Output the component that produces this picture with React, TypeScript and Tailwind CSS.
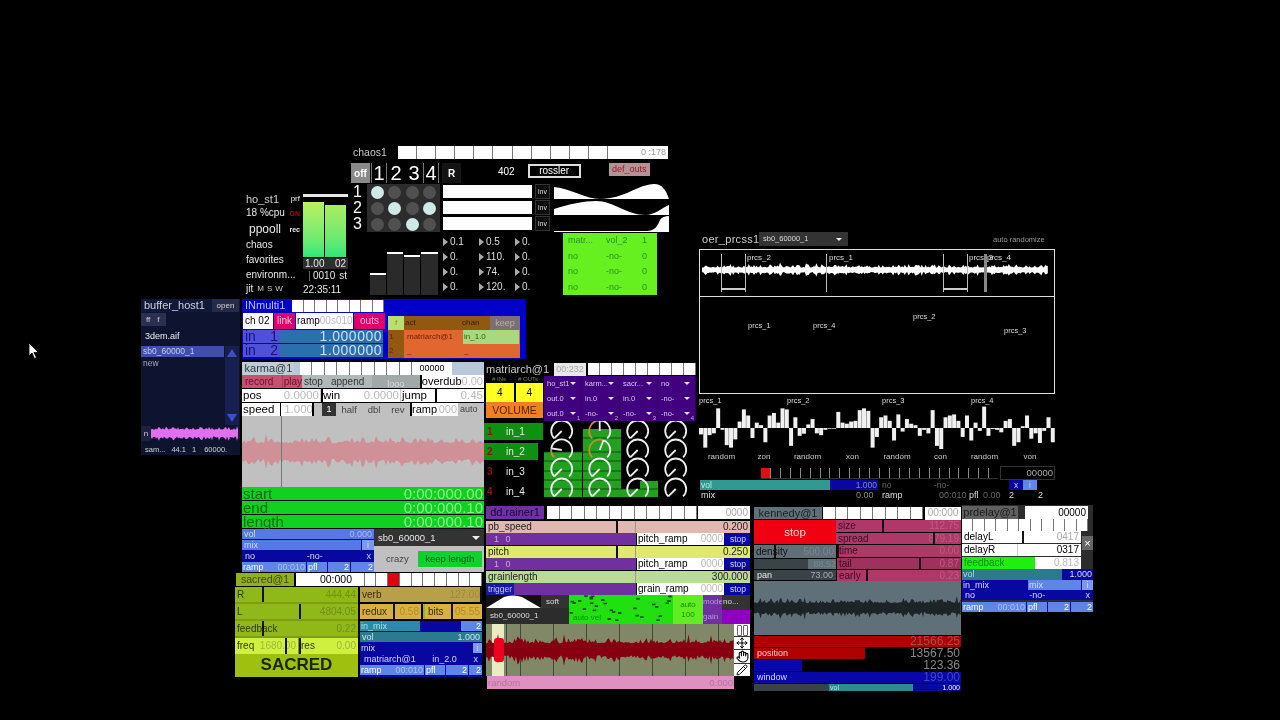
import { Hand, Move, Pencil } from 'lucide-react';

// seeded noise so the waveforms stay the same between renders
function noise(seed: number) {
  let s = seed;
  return () => {
    s = (s * 16807) % 2147483647;
    return s / 2147483647;
  };
}

function wavePath(w: number, h: number, amp: number, step: number, seed: number, base: number) {
  const rnd = noise(seed);
  const top: string[] = [];
  const bottom: string[] = [];
  const mid = h / 2;
  for (let x = 0; x <= w; x += step) {
    const a = amp * (base + 0.65 * rnd() * rnd() + (rnd() > 0.9 ? 0.45 : 0));
    top.push(`${x},${(mid - a).toFixed(1)}`);
    bottom.unshift(`${x},${(mid + a * (0.75 + rnd() * 0.4)).toFixed(1)}`);
  }
  return `M${top.join(' L')} L${bottom.join(' L')} Z`;
}

interface WaveProps {
  w: number;
  h: number;
  amp: number;
  step: number;
  seed: number;
  color: string;
  base?: number;
}

function Wave({ w, h, amp, step, seed, color, base = 0.35 }: WaveProps) {
  return (
    <svg width={w} height={h} className="block">
      <path d={wavePath(w, h, amp, step, seed, base)} fill={color} />
    </svg>
  );
}

function Cells({ n, hot, className }: { n: number; hot?: number; className?: string }) {
  return (
    <div className={`flex ${className ?? ''}`}>
      {Array.from({ length: n }).map((_, i) => (
        <div key={i} className={`flex-1 border-r border-[#777] ${i === hot ? 'bg-[#e00010]' : 'bg-white'}`} />
      ))}
    </div>
  );
}

interface FaderProps {
  className?: string;
  label?: string;
  value?: string;
  thumb?: number;
  valueCls?: string;
}

function Fader({ className, label, value, thumb, valueCls }: FaderProps) {
  return (
    <div className={`relative flex items-center justify-between overflow-hidden px-[2px] leading-none whitespace-nowrap ${className ?? ''}`}>
      <span>{label}</span>
      <span className={valueCls}>{value}</span>
      {thumb !== undefined && <i className="absolute top-0 bottom-0 w-[2px] bg-[#111]" style={{ left: thumb }} />}
    </div>
  );
}

function RampRow() {
  return (
    <div className="flex h-[10px] gap-[1px] bg-[#0808a0] text-[9px] leading-[10px] text-white">
      <div className="flex w-[64px] justify-between bg-[#5f85e8] px-[1px]">
        <span>ramp</span>
        <span className="text-[#a8c0f4]">00:010</span>
      </div>
      <div className="w-[20px] bg-[#5f85e8] px-[1px]">pfl</div>
      <div className="w-[22px] bg-[#5f85e8] px-[1px] text-right">2</div>
      <div className="flex-1 bg-[#5f85e8] px-[1px] text-right">2</div>
    </div>
  );
}

function Tri() {
  return <i className="mr-[2px] inline-block border-y-[4px] border-l-[5px] border-y-transparent border-l-[#aaa]" />;
}

function HoSt() {
  return (
    <div className="absolute left-[246px] top-[192px] flex h-[104px] w-[102px] text-[10px] leading-none text-[#e8e8e8]">
      <div className="flex w-[57px] flex-col pr-[3px]">
        <div className="flex h-[14px] items-center justify-between">
          <span className="text-[11px] text-[#ccc]">ho_st1</span>
          <span className="text-[8px]">prf</span>
        </div>
        <div className="flex h-[14px] items-center justify-between whitespace-nowrap">
          <span>18 %cpu</span>
          <span className="text-[7px] font-bold text-[#a01010]">ON</span>
        </div>
        <div className="flex h-[18px] items-center justify-between pl-[3px]">
          <span className="text-[12px]">ppooll</span>
          <span className="text-[7px] font-bold">rec</span>
        </div>
        <div className="flex h-[14px] items-center">chaos</div>
        <div className="flex h-[15px] items-center">favorites</div>
        <div className="flex h-[15px] items-center whitespace-nowrap">environm...</div>
        <div className="flex h-[14px] items-center gap-[4px]">
          <span>jit</span>
          <span className="text-[8px] tracking-[3px] text-[#ccc]">MSW</span>
        </div>
      </div>
      <div className="flex flex-1 flex-col">
        <div className="mt-[2px] h-[3px] bg-[#e8e8e8]" />
        <div className="mt-[5px] flex h-[55px] items-end gap-[1px]">
          <div className="h-[55px] w-[21px] bg-gradient-to-b from-[#b8f060] to-[#28e878]" />
          <div className="relative h-[52px] w-[21px] bg-gradient-to-b from-[#a8ee60] to-[#28e878]" />
        </div>
        <div className="mt-[1px] flex h-[11px] items-center justify-between bg-[#2e2e2e] px-[2px]">
          <span>1.00</span>
          <span>02</span>
        </div>
        <div className="mt-[1px] flex h-[11px] items-center justify-between pl-[6px] pr-[1px]">
          <span className="border-l border-[#666] pl-[3px]">0010</span>
          <span>st</span>
        </div>
        <div className="mt-[4px] text-[10px]">22:35:11</div>
      </div>
    </div>
  );
}

const matrix = [
  [1, 0, 0, 0],
  [0, 1, 0, 1],
  [0, 0, 1, 0],
];
const numbers = ['0.1', '0.5', '0.', '0.', '110.', '0.', '0.', '74.', '0.', '0.', '120.', '0.'];
const sends = [
  ['matr...', 'vol_2', '1'],
  ['no', '-no-', '0'],
  ['no', '-no-', '0'],
  ['no', '-no-', '0'],
];

function Chaos() {
  return (
    <div className="absolute left-[351px] top-[145px] flex h-[151px] w-[320px] flex-col text-white">
      <div className="flex h-[14px] items-center">
        <span className="ml-[2px] w-[45px] text-[10.5px] leading-none text-[#c8c8c8]">chaos1</span>
        <Cells n={11} className="h-[13px] w-[210px]" />
        <div className="h-[13px] w-[60px] bg-white pr-[2px] text-right text-[9px] leading-[13px] text-[#999]">0 :178</div>
      </div>
      <div className="mt-[4px] flex h-[20px]">
        <div className="flex w-[19px] items-center justify-center bg-[#8a8a8a] text-[10px] font-bold">off</div>
        <div className="ml-[1px] flex w-[69px] items-center text-[20px] leading-none">
          <span className="w-[16px] border-x border-[#777] text-center">1</span>
          <span className="w-[18px] text-center">2</span>
          <span className="w-[18px] text-center">3</span>
          <span className="w-[16px] border-x border-[#777] text-center">4</span>
        </div>
        <div className="ml-[2px] flex w-[19px] items-center justify-center bg-[#141414] text-[10px] font-bold">R</div>
        <span className="ml-[37px] -mt-[3px] self-center text-[10px]">402</span>
        <div className="ml-[13px] mt-[1px] flex h-[14px] w-[53px] items-center justify-center border-2 border-[#ddd] text-[10px] leading-none">rossler</div>
        <div className="ml-[28px] flex h-[13px] w-[41px] items-center justify-center bg-[#b89098] text-[9px] leading-none text-[#b01020]">def_outs</div>
      </div>
      <div className="mt-[1px] flex h-[48px]">
        <div className="flex w-[16px] flex-col items-center pr-[3px] text-[16px] leading-[16px]">
          <span>1</span>
          <span>2</span>
          <span>3</span>
        </div>
        <div className="grid w-[73px] grid-cols-4 items-center justify-items-center bg-[#2c2c2c] px-[2px]">
          {matrix.flat().map((on, i) => (
            <div key={i} className={`h-[13px] w-[13px] rounded-full ${on ? 'bg-[#d0e8e8]' : 'bg-[#505050]'}`} />
          ))}
        </div>
        <div className="ml-[3px] flex w-[89px] flex-col gap-[3px] py-[1px]">
          <div className="h-[13px] bg-white" />
          <div className="h-[13px] bg-white" />
          <div className="h-[13px] bg-white" />
        </div>
        <div className="ml-[3px] flex w-[15px] flex-col gap-[1px] text-[7px]">
          {['inv', 'inv', 'inv'].map((t, i) => (
            <div key={i} className="flex h-[15px] items-center justify-center border border-[#333] bg-[#0c0c0c] leading-none text-[#ddd]">
              {t}
            </div>
          ))}
        </div>
        <svg width="115" height="48" className="ml-[4px]">
          <path d="M0 15 L0 3 C18 5 32 15 46 15 C70 15 85 0 100 0 C108 0 112 6 115 15 Z" fill="#fff" />
          <path d="M0 31 L0 25 C15 20 30 17 42 17 C60 17 72 31 92 31 C100 31 108 24 115 21 L115 31 Z" fill="#fff" />
          <path d="M0 47 L90 47 C98 47 102 46 106 36 C108 33 111 32 115 32 L115 48 L0 48 Z" fill="#fff" />
        </svg>
      </div>
      <div className="mt-[1px] flex h-[63px]">
        <div className="flex w-[92px] items-end gap-[1px] pl-[19px] pb-[1px]">
          <div className="h-[22px] w-[16px] border-t-2 border-white bg-[#2a2a2a]" />
          <div className="h-[43px] w-[16px] border-t-2 border-white bg-[#2a2a2a]" />
          <div className="h-[40px] w-[16px] border-t-2 border-white bg-[#2a2a2a]" />
          <div className="h-[43px] w-[17px] border-t-2 border-white bg-[#2a2a2a]" />
        </div>
        <div className="mt-[1px] grid h-[60px] w-[108px] grid-cols-3 text-[10px] leading-[15px] text-[#ddd]">
          {numbers.map((n, i) => (
            <div key={i} className="flex items-center">
              <Tri />
              {n}
            </div>
          ))}
        </div>
        <div className="ml-[12px] grid h-[62px] w-[94px] grid-cols-[38px_36px_1fr] items-center bg-[#66f020] px-[5px] text-[9px] leading-none text-[#28921c]">
          {sends.flat().map((t, i) => (
            <span key={i}>{t}</span>
          ))}
        </div>
      </div>
    </div>
  );
}

function BufferHost() {
  return (
    <div className="absolute left-[141px] top-[299px] flex h-[156px] w-[99px] flex-col bg-[#0e1430] text-[#d0d0d8]">
      <div className="flex h-[13px] items-center bg-[#10193a]">
        <span className="ml-[3px] w-[67px] text-[11px] leading-none">buffer_host1</span>
        <span className="ml-[1px] flex h-[13px] w-[27px] items-center justify-center bg-[#262c48] text-[8px]">open</span>
      </div>
      <div className="mt-[1px] flex h-[13px] w-[25px] items-center gap-[7px] bg-[#2b3050] pl-[5px] text-[8px]">
        <span>ff</span>
        <span>f</span>
      </div>
      <div className="mt-[4px] h-[13px] pl-[4px] text-[9px] leading-[13px] text-[#eee]">3dem.aif</div>
      <div className="mt-[3px] flex h-[79px]">
        <div className="w-[83px] text-[8.5px] leading-[11px]">
          <div className="bg-[#3f4fa8] pl-[2px] text-[#c8ccee]">sb0_60000_1</div>
          <div className="pl-[2px] pt-[1px] text-[#aab]">new</div>
        </div>
        <div className="ml-[1px] flex w-[14px] flex-col items-center justify-between bg-[#161f50] py-[3px]">
          <i className="border-x-[5px] border-b-[8px] border-x-transparent border-b-[#3f4fb8]" />
          <i className="border-x-[5px] border-t-[8px] border-x-transparent border-t-[#3f4fc8]" />
        </div>
      </div>
      <div className="mt-[1px] flex h-[15px] items-center">
        <span className="flex h-[15px] w-[10px] items-center justify-center bg-[#1c2140] text-[8px]">n</span>
        <Wave w={87} h={15} amp={4.5} step={1} seed={91} color="#e070f0" base={0.85} />
      </div>
      <div className="mt-[4px] flex gap-[6px] pl-[4px] text-[7.5px] leading-[10px] whitespace-nowrap">
        <span>sam...</span>
        <span>44.1</span>
        <span>1</span>
        <span className="ml-[2px]">60000.</span>
      </div>
    </div>
  );
}

function InMulti() {
  return (
    <div className="absolute left-[242px] top-[299px] flex h-[60px] w-[284px] bg-[#0000c8]">
      <div className="flex w-[144px] flex-col">
        <div className="flex h-[13px] items-center">
          <span className="ml-[3px] w-[47px] text-[11px] leading-none text-[#b8c0f0]">INmulti1</span>
          <Cells n={8} className="h-[12px] w-[92px]" />
        </div>
        <div className="mt-[1px] flex h-[16px] gap-[1px] text-[10px] leading-[16px]">
          <div className="ml-[1px] w-[30px] bg-white pl-[2px] text-black">ch 02</div>
          <div className="w-[21px] bg-[#e0006a] text-center text-[#f8c8dc]">link</div>
          <div className="flex w-[57px] justify-between bg-white px-[1px] text-black">
            ramp<span className="text-[#bbb]">00s010</span>
          </div>
          <div className="w-[31px] bg-[#e0006a] text-center text-[#fbd]">outs</div>
        </div>
        {['1', '2'].map((n) => (
          <div key={n} className="mt-[1px] flex h-[13px] text-[14px] leading-[13px]">
            <div className="ml-[1px] flex w-[37px] justify-between bg-[#5050d8] px-[2px] text-[#141478]">
              <span>in</span>
              <span>{n}</span>
            </div>
            <div className="mr-[3px] flex flex-1 justify-end bg-[#2a70b0] pr-[1px] tracking-[0.5px] text-[#cfe0f4]">1.000000</div>
          </div>
        ))}
      </div>
      <div className="ml-[2px] mt-[17px] flex h-[42px] w-[132px] flex-col text-[8px] leading-[14px]">
        <div className="flex h-[14px] bg-[#905810] text-[#3a2000]">
          <span className="w-[16px] bg-[#b8e070] text-center text-[#7a9030]">f</span>
          <span className="w-[57px] pl-[1px]">act</span>
          <span className="w-[29px] pl-[1px]">chan</span>
          <span className="flex-1 bg-[#7a7070] text-center text-[9px] text-[#b8b0a8]">keep</span>
        </div>
        <div className="flex h-[14px] bg-[#e06830] text-[#702000]">
          <span className="w-[16px] bg-[#905810] pl-[1px]">1</span>
          <span className="w-[59px] pl-[3px]">matriarch@1</span>
          <span className="w-[56px] bg-[#a8d880] pl-[1px] text-[#306000]">in_1.0</span>
        </div>
        <div className="flex h-[14px] bg-[#e06830] text-[#702000]">
          <span className="w-[16px] bg-[#905810] pl-[1px]">2</span>
          <span className="w-[59px] pl-[3px]">_</span>
          <span className="w-[56px] pl-[1px]">_</span>
        </div>
      </div>
    </div>
  );
}

function Karma() {
  return (
    <div className="absolute left-[242px] top-[362px] flex h-[209px] w-[242px] flex-col text-black">
      <div className="flex h-[14px] items-center bg-[#b8c8d8]">
        <div className="ml-[1px] h-[13px] w-[51px] bg-[#c0ccd8] text-center text-[11px] leading-[13px] text-[#333]">karma@1</div>
        <Cells n={9} className="ml-[6px] h-[13px] w-[112px]" />
        <div className="h-[13px] w-[40px] bg-white text-center text-[9px] leading-[13px]">00000</div>
      </div>
      <div className="flex h-[13px] text-[10px] leading-[13px]">
        <div className="flex w-[60px] bg-[#c85070] text-[#6a1030]">
          <span className="w-[41px] pl-[3px]">record</span>
          <span className="flex-1 border-l border-[#a04060] pl-[1px]">play</span>
        </div>
        <div className="flex w-[70px] gap-[4px] bg-[#b0b8b8] pl-[2px] text-[#333]">
          <span>stop</span>
          <span className="ml-[4px]">append</span>
        </div>
        <div className="w-[48px] bg-[#a0a8a8] text-center text-[9px] leading-[18px] text-[#ddd]">looo</div>
        <div className="flex flex-1 justify-between border-l-2 border-black bg-white pr-[1px] text-[11px]">
          <span>overdub</span>
          <span className="text-[#bbb]">0.00</span>
        </div>
      </div>
      <div className="mt-[1px] flex h-[13px] gap-[1px] bg-[#ccc] text-[11.5px] leading-[13px]">
        <div className="flex w-[78px] justify-between bg-white px-[1px]">
          pos<span className="text-[#bbb]">0.0000</span>
        </div>
        <div className="flex w-[79px] justify-between border-l-2 border-black bg-white pr-[1px]">
          win<span className="text-[#bbb]">0.0000</span>
        </div>
        <div className="relative flex flex-1 justify-between bg-white px-[1px]">
          jump<span className="text-[#bbb]">0.45</span>
          <i className="absolute bottom-0 left-[34px] top-0 w-[2px] bg-black" />
        </div>
      </div>
      <div className="mt-[1px] flex h-[13px] bg-[#c0c0c0] text-[11.5px] leading-[13px]">
        <div className="relative flex w-[72px] justify-between bg-white px-[1px]">
          speed<span className="text-[#bbb]">1.000</span>
          <i className="absolute bottom-0 left-[38px] top-0 w-[1px] bg-black" />
          <i className="absolute bottom-0 left-[70px] top-0 w-[2px] bg-black" />
        </div>
        <div className="ml-[8px] h-[13px] w-[14px] bg-[#333] text-center text-[9px] text-white">1</div>
        <div className="flex w-[74px] justify-around text-[9.5px] text-[#444]">
          <span>half</span>
          <span>dbl</span>
          <span>rev</span>
        </div>
        <div className="flex w-[48px] justify-between border-l-2 border-black bg-white pr-[1px] text-[11px]">
          ramp<span className="text-[#bbb]">000</span>
        </div>
        <div className="flex-1 pl-[2px] text-[9px] text-[#444]">auto</div>
      </div>
      <div className="relative h-[71px] bg-[#c0c0c0]">
        <div className="pt-[1px]">
          <Wave w={242} h={70} amp={11} step={2} seed={43} color="#d09098" base={0.8} />
        </div>
        <i className="absolute bottom-0 left-[39px] top-0 w-[1px] bg-[#777]" />
      </div>
      {[
        ['start', '0:00:000.00'],
        ['end', '0:00:000.10'],
        ['length', '0:00:000.10'],
      ].map(([a, b]) => (
        <div key={a} className="mb-[1px] flex h-[13px] items-center justify-between bg-[#10d020] px-[1px] text-[15px] leading-[13px] text-[#086a10]">
          <span>{a}</span>
          <span className="text-[#90f090]">{b}</span>
        </div>
      ))}
      <div className="flex h-[43px]">
        <div className="flex w-[132px] flex-col gap-[1px] bg-[#0808a0] text-[9px] leading-[10px]">
          <Fader className="h-[10px] bg-[#5878e8] text-[#d0dcf8]" label="vol" value="0.000" valueCls="text-[#a8c0f4]" />
          <div className="flex h-[10px]">
            <div className="w-[119px] bg-[#5878e8] pl-[2px] text-[#d0dcf8]">mix</div>
            <div className="ml-[1px] flex-1 bg-[#7a98ee] text-center text-[#d0dcf8]">i</div>
          </div>
          <div className="flex h-[10px] justify-between bg-[#0808a0] px-[3px] text-[#d0d8f8]">
            <span>no</span>
            <span className="ml-[8px]">-no-</span>
            <span>x</span>
          </div>
          <RampRow />
        </div>
        <div className="flex flex-1 flex-col bg-[#c0c0c0]">
          <div className="flex h-[17px] items-center justify-between bg-[#333] pl-[4px] pr-[4px] text-[9.5px] leading-none text-[#e8e8e8]">
            sb0_60000_1
            <i className="border-x-[4px] border-t-[4px] border-x-transparent border-t-[#eee]" />
          </div>
          <div className="flex flex-1 items-center pl-[12px] text-[9.5px]">
            <span className="text-[#444]">crazy</span>
            <span className="ml-[9px] flex h-[16px] w-[64px] items-center justify-center bg-[#10d030] text-[#095a20]">keep length</span>
          </div>
        </div>
      </div>
    </div>
  );
}

function Sacred() {
  return (
    <div className="absolute left-[235px] top-[572px] flex h-[105px] w-[247px] flex-col text-black">
      <div className="flex h-[14px] items-center">
        <div className="ml-[1px] h-[13px] w-[58px] bg-[#90b020] text-center text-[10.5px] leading-[13px] text-[#404800]">sacred@1</div>
        <div className="ml-[2px] h-[13px] w-[57px] bg-white pr-[1px] text-right text-[10.5px] leading-[13px]">00:000</div>
        <Cells n={11} hot={3} className="h-[13px] flex-1" />
      </div>
      <div className="mt-[1px] flex flex-1">
        <div className="flex w-[123px] flex-col gap-[2px] bg-[#7e9e14] text-[10px]">
          <Fader className="h-[15px] bg-[#90b818] text-[#2e3a00]" label="R" value="444.44" thumb={27} valueCls="text-[#728f20]" />
          <Fader className="h-[15px] bg-[#90b818] text-[#2e3a00]" label="L" value="4804.05" thumb={64} valueCls="text-[#728f20]" />
          <Fader className="h-[15px] bg-[#90b818] text-[#2e3a00]" label="feedback" value="0.22" thumb={27} valueCls="text-[#728f20]" />
          <div className="flex h-[16px] gap-[1px]">
            <Fader className="w-[63px] bg-[#d0f040] text-[#2e3a00]" label="freq" value="1680.00" thumb={50} valueCls="text-[#a0b840]" />
            <Fader className="flex-1 bg-[#d0f040] text-[#2e3a00]" label="res" value="0.00" thumb={0} valueCls="text-[#a0b840]" />
          </div>
          <div className="-mt-[2px] flex-1 bg-[#a0c010] text-center text-[17px] font-bold leading-[21px] text-[#1c2400]">SACRED</div>
        </div>
        <div className="ml-[2px] flex flex-1 flex-col gap-[2px] text-[10px]">
          <Fader className="h-[15px] bg-[#b8a048] text-[#3a2c00]" label="verb" value="127.00" thumb={120} valueCls="text-[#a08a38]" />
          <div className="flex h-[15px] gap-[2px]">
            <Fader className="w-[61px] bg-[#d8b040] text-[#3a2c00]" label="redux" value="0.58" thumb={33} valueCls="text-[#b08c30]" />
            <Fader className="flex-1 border-l-[2px] border-[#90b818] bg-[#d8b040] pl-[3px] text-[#3a2c00]" label="bits" value="05.55" thumb={26} valueCls="text-[#b08c30]" />
          </div>
          <div className="flex flex-1 flex-col gap-[1px] bg-[#0808a0] text-[9px] leading-[10px]">
            <div className="flex h-[10px] bg-[#0808a0]">
              <div className="w-[60px] bg-[#2c8aa8] pl-[1px] text-[#a8e0e8]">in_mix</div>
              <div className="flex-1" />
              <div className="w-[21px] bg-[#5f85e8] pr-[1px] text-right text-white">2</div>
            </div>
            <Fader className="h-[10px] bg-[#2c7a90] text-[#c8e8f0]" label="vol" value="1.000" />
            <div className="flex h-[10px] text-[#d0d8f8]">
              <span className="flex-1 pl-[1px]">mix</span>
              <span className="w-[9px] bg-[#7a98ee] text-center">i</span>
            </div>
            <div className="flex h-[10px] justify-between px-[4px] text-[#d0d8f8]">
              <span>matriarch@1</span>
              <span>in_2.0</span>
              <span>x</span>
            </div>
            <RampRow />
          </div>
        </div>
      </div>
    </div>
  );
}

function Knobs() {
  const cols = [17.7, 55.7, 93.7, 131.7];
  const rows = [10, 29, 48, 68];
  // pointer position per knob, only a few are moved off their resting place
  const moved: Record<string, number> = { '1-0': 0.2, '0-1': 0.5, '1-1': 0.58 };
  const polar = (cx: number, cy: number, r: number, t: number) => {
    const a = ((t * 270 - 135 - 90) * Math.PI) / 180;
    return [cx + r * Math.cos(a), cy + r * Math.sin(a)];
  };
  const arc = (cx: number, cy: number, from: number, to: number) => {
    const [x1, y1] = polar(cx, cy, 10.5, from);
    const [x2, y2] = polar(cx, cy, 10.5, to);
    return `M${x1} ${y1} A10.5 10.5 0 ${to - from > 2 / 3 ? 1 : 0} 1 ${x2} ${y2}`;
  };
  return (
    <svg width="151" height="78" className="block">
      <g fill="#22a020">
        <rect x="0" y="31" width="38" height="45" />
        <rect x="39" y="8" width="38" height="68" />
        <rect x="77" y="68" width="20" height="8" />
        <rect x="96" y="60" width="18" height="16" />
      </g>
      <g stroke="#0a3a0a" strokeWidth="0.8">
        {[17, 31, 40, 50, 59, 68].map((y) => (
          <path key={y} d={`M${y < 30 ? 39 : 0} ${y}H${y < 60 ? 77 : 114}`} />
        ))}
      </g>
      <g fill="none" strokeWidth="1.8">
        {rows.map((y, r) =>
          cols.map((x, c) => {
            const v = moved[`${r}-${c}`] ?? 0;
            const [px, py] = polar(x, y, 10.5, v);
            return (
              <g key={`${r}-${c}`}>
                {v > 0 && <path d={arc(x, y, 0, v)} stroke="#c09030" />}
                <path d={arc(x, y, v, 1)} stroke="#eee" />
                <path d={`M${x} ${y}L${px} ${py}`} stroke="#eee" />
              </g>
            );
          }),
        )}
      </g>
    </svg>
  );
}

const routing = [
  ['ho_st1', 'karm...', 'sacr...', 'no'],
  ['out.0', 'in.0', 'in.0', '-no-'],
  ['out.0', '-no-', '-no-', '-no-'],
];

function Matriarch() {
  return (
    <div className="absolute left-[484px] top-[362px] flex w-[212px] flex-col">
      <div className="flex h-[14px] items-center">
        <span className="ml-[2px] w-[68px] text-[11px] leading-none text-[#ccc]">matriarch@1</span>
        <span className="h-[13px] w-[32px] bg-[#e8e8e8] text-center text-[9px] leading-[13px] text-[#aaa]">00:232</span>
        <Cells n={9} className="ml-[2px] h-[12px] flex-1" />
      </div>
      <div className="flex">
        <div className="flex w-[60px] flex-col">
          <div className="flex h-[7px] justify-around pl-[2px] text-[6px] leading-[7px] text-[#6a9a10]">
            <span># INs</span>
            <span># OUTs</span>
          </div>
          <div className="ml-[2px] flex h-[19px] w-[57px] gap-[2px] text-[10px] leading-[19px] text-black">
            <div className="flex-1 bg-[#ffff20] text-center">4</div>
            <div className="flex-1 bg-[#ffff20] text-center">4</div>
          </div>
          <div className="ml-[2px] h-[16px] w-[57px] bg-[#f08020] text-center text-[10.5px] leading-[16px] text-[#5a2000]">VOLUME</div>
          <div className="mt-[5px] flex flex-col text-[10px] leading-none">
            {['in_1', 'in_2', 'in_3', 'in_4'].map((t, i) => (
              <div key={t} className={`mb-[3px] flex h-[17px] items-center ${i < 2 ? (i === 0 ? 'w-[59px] bg-[#109010]' : 'w-[54px] bg-[#109010]') : 'w-[54px]'}`}>
                <span className="w-[22px] pl-[3px] font-bold text-[#901010]">{i + 1}</span>
                <span className="text-[#e8e8e8]">{t}</span>
              </div>
            ))}
          </div>
        </div>
        <div className="flex w-[152px] flex-col">
          <div className="grid h-[45px] grid-cols-4 bg-[#400080] text-[7.5px] leading-none text-[#d8c8e8]">
            {routing.flatMap((row, r) =>
              row.map((t, c) => (
                <div key={`${r}${c}`} className="relative flex items-center justify-between border-r border-[#300060] pl-[3px] pr-[5px]">
                  <span className="whitespace-nowrap">{t}</span>
                  <i className="border-x-[3px] border-t-[3px] border-x-transparent border-t-[#e8e0f0]" />
                  {r === 2 && <span className="absolute bottom-0 right-[1px] text-[6px] text-[#b8a8d0]">{c + 1}</span>}
                </div>
              )),
            )}
          </div>
          <Knobs />
        </div>
      </div>
    </div>
  );
}

const bars = [
  -18, -55, -20, -15, 55, -5, -48, -55, -32, 18, 52, 35, -28, 15, 8, -40, 35, 42, 15, 55, 52,
  -50, 30, -22, -16, 10, 25, -15, -20, -5, -2, -2, 45, 15, 12, 18, 20, 50, 55, 48, -55, -25,
  30, 35, 20, -35, 38, -10, 25, 12, 8, -22, -5, -15, 50, -50, -60, 30, 35, 38, 20, -25, 35,
  -35, 15, -8, 60, -22, -3, -5, -12, 20, 25, -50, -40, 5, 35, -30, -15, -42, -8, 30, -40,
];
const modes = ['random', 'zon', 'random', 'xon', 'random', 'con', 'random', 'von'];
const modeWidths = ['w-[45px]', 'w-[40px]', 'w-[47px]', 'w-[43px]', 'w-[46px]', 'w-[41px]', 'w-[47px]', 'w-[44px]'];

function OerPrcss() {
  return (
    <div className="absolute left-[699px] top-[232px] flex w-[356px] flex-col text-[#ddd]">
      <div className="flex h-[17px] items-start">
        <span className="ml-[3px] mt-[1px] w-[57px] text-[11px] leading-[12px] tracking-[0.3px] text-[#ccc]">oer_prcss1</span>
        <div className="flex h-[14px] w-[89px] items-center justify-between bg-[#333] pl-[4px] pr-[6px] text-[7.5px] leading-none">
          sb0_60000_1
          <i className="border-x-[3px] border-t-[3px] border-x-transparent border-t-[#eee]" />
        </div>
        <span className="ml-[145px] mt-[4px] whitespace-nowrap text-[7.5px] leading-none text-[#999]">auto randomize</span>
      </div>
      <div className="relative h-[48px] border border-[#ddd]">
        <div className="pl-[2px]">
          <Wave w={346} h={40} amp={5} step={1.3} seed={77} color="#fff" base={0.5} />
        </div>
        <span className="absolute left-[47px] top-[4px] text-[8px] leading-none">prcs_2</span>
        <span className="absolute left-[129px] top-[4px] text-[8px] leading-none">prcs_1</span>
        <span className="absolute left-[269px] top-[4px] text-[8px] leading-none">prcs_3</span>
        <span className="absolute left-[287px] top-[4px] text-[8px] leading-none">prcs_4</span>
        <i className="absolute left-[21px] top-[4px] h-[38px] w-[1px] bg-[#bbb]" />
        <i className="absolute left-[45px] top-[4px] h-[38px] w-[1px] bg-[#bbb]" />
        <i className="absolute left-[21px] top-[38px] h-[2px] w-[24px] bg-[#ccc]" />
        <i className="absolute left-[126px] top-[4px] h-[38px] w-[1px] bg-[#bbb]" />
        <i className="absolute left-[243px] top-[4px] h-[38px] w-[1px] bg-[#bbb]" />
        <i className="absolute left-[267px] top-[4px] h-[38px] w-[1px] bg-[#bbb]" />
        <i className="absolute left-[243px] top-[38px] h-[2px] w-[24px] bg-[#ccc]" />
        <i className="absolute left-[284px] top-[4px] h-[38px] w-[3px] bg-[#888]" />
      </div>
      <div className="relative -mt-[1px] h-[98px] border border-[#ddd] text-[7.5px] leading-none">
        <span className="absolute left-[48px] top-[25px]">prcs_1</span>
        <span className="absolute left-[113px] top-[25px]">prcs_4</span>
        <span className="absolute left-[213px] top-[16px]">prcs_2</span>
        <span className="absolute left-[304px] top-[30px]">prcs_3</span>
      </div>
      <div className="mt-[2px] flex h-[9px] text-[7.5px] leading-[9px]">
        <span className="w-[88px]">prcs_1</span>
        <span className="w-[95px]">prcs_2</span>
        <span className="w-[89px]">prcs_3</span>
        <span>prcs_4</span>
      </div>
      <svg width="356" height="44" className="block">
        {bars.map((b, i) => {
          const v = b / 2.8;
          return <rect key={i} x={i * 4.29} y={v > 0 ? 23 - v : 23} width="4" height={Math.abs(v)} fill="#f0f0f0" />;
        })}
      </svg>
      <div className="mt-[2px] flex h-[12px] text-[8px] leading-[12px] text-[#ccc]">
        {modes.map((m, i) => (
          <span key={i} className={`text-center ${modeWidths[i]}`}>
            {m}
          </span>
        ))}
      </div>
      <div className="mt-[3px] flex h-[14px]">
        <div className="ml-[62px] flex h-[11px] w-[237px] self-center border-b border-[#333]">
          <i className="w-[9px] bg-[#e01010]" />
          {Array.from({ length: 23 }).map((_, i) => (
            <i key={i} className="w-[10px] border-l border-[#888]" />
          ))}
        </div>
        <div className="ml-[2px] flex-1 border border-[#333] pr-[1px] text-right text-[9.5px] leading-[12px] text-[#aaa]">00000</div>
      </div>
      <div className="flex h-[10px] text-[8.5px] leading-[10px]">
        <div className="ml-[1px] w-[130px] bg-[#2e9a90] pl-[1px] text-[#c8e8e0]">vol</div>
        <div className="w-[48px] bg-[#0808a0] pr-[1px] text-right text-[#88a]">1.000</div>
        <div className="ml-[4px] w-[52px] text-[#666]">no</div>
        <div className="w-[75px] text-[#666]">-no-</div>
        <div className="w-[14px] bg-[#0808a0] text-center text-[#ccd]">x</div>
        <div className="w-[14px] bg-[#5f85e8] text-center text-[#ccd]">i</div>
      </div>
      <div className="flex h-[10px] text-[9px] leading-[10px]">
        <span className="ml-[2px] w-[155px]">mix</span>
        <span className="w-[23px] text-[#888]">0.00</span>
        <span className="ml-[3px] w-[57px]">ramp</span>
        <span className="w-[30px] text-[#666]">00:010</span>
        <span className="w-[14px]">pfl</span>
        <span className="w-[17px] text-[#666]">0.00</span>
        <span className="ml-[9px] w-[29px]">2</span>
        <span>2</span>
      </div>
    </div>
  );
}

const rainerRows = [
  { name: 'pb_speed', val: '0.200', bg: 'bg-[#e0b8b0]', ramp: 'pitch_ramp', thumb: 130 },
  { name: 'pitch', val: '0.250', bg: 'bg-[#e0e870]', ramp: 'pitch_ramp', thumb: 130 },
  { name: 'grainlength', val: '300.000', bg: 'bg-[#b8dc98]', ramp: 'grain_ramp', thumb: 0 },
];

// black speckles of the velocity scatter
const dotRnd = noise(2024);
const dots = Array.from({ length: 30 }).map(() => [dotRnd() * 100, dotRnd() * 25]);

function Rainer() {
  return (
    <div className="absolute left-[484px] top-[505px] flex w-[266px] flex-col text-black">
      <div className="flex h-[15px] items-center">
        <div className="ml-[2px] h-[13px] w-[58px] bg-[#7030a0] text-center text-[11px] leading-[13px] text-[#1a0830]">dd.rainer1</div>
        <Cells n={12} className="ml-[3px] h-[13px] w-[150px]" />
        <div className="ml-[1px] h-[13px] flex-1 bg-white pr-[2px] text-right text-[10px] leading-[13px] text-[#aaa]">0000</div>
      </div>
      {rainerRows.map((r, i) => (
        <div key={r.name} className="ml-[2px] mt-[1px] flex flex-col text-[10px]">
          <div className="relative">
            <Fader className={`h-[12px] ${r.bg} text-[#222]`} label={r.name} value={r.val} thumb={r.thumb || undefined} />
            <i className="absolute bottom-0 left-[149px] top-0 w-[1px] bg-[#999]" />
          </div>
          <div className="flex h-[12px] bg-[#0808a0] leading-[12px]">
            <div className="flex w-[150px] items-center bg-[#7030a0] pl-[8px] text-[9px] tracking-[2px] text-[#c8a8e0]">
              {i === 2 ? <span className="-ml-[8px] bg-[#1818a0] px-[2px] text-[8.5px] tracking-normal text-[#c8c8f0]">trigger</span> : '1 0'}
            </div>
            <div className="flex w-[88px] justify-between border-l border-black bg-white pl-[1px] pr-[1px]">
              {r.ramp}
              <span className="text-[#bbb]">0000</span>
            </div>
            <div className="ml-[2px] flex-1 text-center text-[8.5px] text-[#d8d8f8]">stop</div>
          </div>
        </div>
      ))}
      <div className="ml-[2px] flex h-[29px]">
        <div className="flex w-[83px] flex-col bg-[#333] text-[8px] leading-none text-[#ddd]">
          <div className="flex h-[13px] items-center">
            <svg width="55" height="13" className="bg-[#111]">
              <path d="M0 13 L18 2 Q27 -1 36 2 L55 13 Z" fill="#fff" />
            </svg>
            <span className="ml-[5px]">soft</span>
          </div>
          <div className="flex h-[16px] items-center bg-[#2c2c2c] pl-[4px]">sb0_60000_1</div>
        </div>
        <div className="relative w-[104px] bg-[#20e010]">
          <svg width="104" height="29" className="block">
            {dots.map(([x, y], i) => (
              <rect key={i} x={x} y={y} width="3.5" height="1.6" fill="#0a400a" />
            ))}
          </svg>
          <span className="absolute bottom-[2px] left-[4px] text-[8px] leading-none text-[#0a8a10]">auto vel</span>
        </div>
        <div className="flex w-[30px] flex-col items-center justify-center gap-[2px] bg-[#60ee20] text-[8px] leading-none text-[#1a8a10]">
          <span>auto</span>
          <span>100</span>
        </div>
        <div className="grid w-[47px] grid-cols-[19px_1fr] grid-rows-2 bg-[#7030a0] text-[8px] leading-[14px] text-[#b898d8]">
          <span>mode</span>
          <span className="bg-[#333] pl-[1px] text-[#ddd]">no...</span>
          <span>gain</span>
          <span className="bg-[#9000c0] pl-[1px] text-[#500070]">?</span>
        </div>
      </div>
      <div className="ml-[2px] flex h-[52px]">
        <div className="relative w-[248px] overflow-hidden bg-[#808868]">
          <div className="absolute bottom-0 left-[6px] top-0 w-[12px] bg-[#e8ecc0]" />
          {[20, 34, 67, 100, 133, 166, 199, 232].map((x) => (
            <i key={x} className="absolute bottom-0 top-0 w-[1px] bg-[#404838]" style={{ left: x }} />
          ))}
          <div className="relative">
            <Wave w={248} h={52} amp={9} step={1.5} seed={19} color="#860012" base={0.75} />
          </div>
          <div className="absolute left-[8px] top-[14px] h-[24px] w-[10px] rounded-[3px] bg-[#f00020]" />
        </div>
        <div className="flex flex-1 flex-col gap-[1px] bg-[#333] text-black">
          <div className="flex h-[13px] items-center justify-center gap-[1px] bg-white">
            <i className="h-[11px] w-[5px] rounded-[1px] border border-[#666]" />
            <i className="h-[11px] w-[5px] rounded-[1px] border border-[#666]" />
          </div>
          <div className="flex h-[12px] items-center justify-center bg-white">
            <Move size={12} />
          </div>
          <div className="flex h-[13px] items-center justify-center bg-white">
            <Hand size={13} />
          </div>
          <div className="flex h-[13px] items-center justify-center bg-white">
            <Pencil size={12} />
          </div>
        </div>
      </div>
      <div className="ml-[3px] flex h-[13px] w-[247px] items-center justify-between bg-[#e090c0] px-[1px] text-[9.5px] leading-none text-[#b870a0]">
        <span>random</span>
        <span>0.000</span>
      </div>
    </div>
  );
}

function Kennedy() {
  return (
    <div className="absolute left-[754px] top-[507px] flex w-[207px] flex-col text-[#111]">
      <div className="flex h-[13px]">
        <div className="h-[12px] w-[68px] bg-[#607078] text-center text-[11px] leading-[12px] text-[#1a2024]">kennedy@1</div>
        <Cells n={8} className="ml-[1px] h-[12px] w-[100px]" />
        <div className="ml-[2px] flex-1 bg-white text-center text-[10px] leading-[12px] text-[#aaa]">00:000</div>
      </div>
      <div className="flex h-[24px]">
        <div className="w-[82px] bg-[#f00010] text-center text-[11.5px] leading-[24px] text-[#f8e0e0]">stop</div>
        <div className="flex flex-1 flex-col gap-[1px] text-[10px]">
          <Fader className="h-[12px] bg-[#b03868] text-[#3c0c24]" label="size" value="112.75" thumb={46} valueCls="text-[#c05880]" />
          <Fader className="h-[11px] bg-[#b03868] text-[#3c0c24]" label="spread" value="879.19" thumb={97} valueCls="text-[#c05880]" />
        </div>
      </div>
      <div className="mt-[1px] flex h-[36px] gap-[1px] text-[10px]">
        <div className="flex w-[82px] flex-col gap-[1px]">
          <Fader className="h-[13px] bg-[#607078]" label="density" value="500.00" thumb={20} valueCls="text-[#78888e]" />
          <div className="flex h-[10px] bg-[#607078]">
            <i className="w-[54px] bg-[#3a4448]" />
            <span className="flex-1 text-right text-[9px] leading-[10px] text-[#78888e]">88.52</span>
          </div>
          <div className="flex h-[10px] items-center justify-between bg-[#3a4448] px-[3px] text-[9px] leading-none text-[#e8e8e8]">
            <span>pan</span>
            <span className="text-[#aab]">73.00</span>
          </div>
        </div>
        <div className="flex flex-1 flex-col gap-[1px]">
          <Fader className="h-[12px] bg-[#b03868] text-[#3c0c24]" label="time" value="0.00" thumb={0} valueCls="text-[#c05880]" />
          <Fader className="h-[11px] bg-[#a03060] text-[#3c0c24]" label="tail" value="0.87" thumb={82} valueCls="text-[#c05880]" />
          <Fader className="h-[11px] bg-[#b03868] text-[#3c0c24]" label="early" value="0.23" thumb={29} valueCls="text-[#c05880]" />
        </div>
      </div>
      <div className="bg-[#607078]">
        <Wave w={207} h={54} amp={7} step={1.3} seed={61} color="#1c2428" base={0.7} />
      </div>
      <div className="mt-[1px] flex flex-col gap-[1px] text-[12px] leading-[11px] text-[#888]">
        <div className="h-[11px] bg-[#b00000] pr-[1px] text-right text-[#a05050]">21566.25</div>
        <div className="flex h-[11px] justify-between bg-black">
          <span className="w-[111px] bg-[#b00000] pl-[3px] text-[9px] text-[#f0d0d0]">position</span>
          <span className="pr-[1px]">13567.50</span>
        </div>
        <div className="flex h-[11px] justify-between bg-black">
          <span className="w-[48px] bg-[#0808a8]" />
          <span className="pr-[1px]">123.36</span>
        </div>
        <div className="flex h-[11px] items-center justify-between bg-[#0808a8]">
          <span className="pl-[3px] text-[9px] text-[#d8d8f8]">window</span>
          <span className="pr-[1px] text-[#4048c0]">199.00</span>
        </div>
        <div className="flex h-[7px] bg-[#3a4448] text-[7px] leading-[7px]">
          <span className="ml-[75px] w-[84px] bg-[#2c8a90] pl-[1px] text-[#c8e8e8]">vol</span>
          <span className="flex-1 bg-[#0808a0] pr-[1px] text-right text-white">1.000</span>
        </div>
      </div>
    </div>
  );
}

function PrDelay() {
  return (
    <div className="absolute left-[962px] top-[505px] flex w-[131px] flex-col bg-[#2c2c2c] text-black">
      <div className="flex h-[14px] items-center">
        <div className="h-[13px] w-[56px] bg-[#606060] text-center text-[11px] leading-[13px] text-[#1a1a1a]">prdelay@1</div>
        <div className="ml-[7px] h-[13px] w-[63px] bg-white pr-[2px] text-right text-[10px] leading-[13px]">00000</div>
      </div>
      <Cells n={11} className="h-[12px] w-[126px]" />
      <div className="flex">
        <div className="flex w-[119px] flex-col gap-[1px] text-[10px]">
          <Fader className="h-[12px] bg-white" label="delayL" value="0417" thumb={60} valueCls="text-[#aaa]" />
          <div className="relative">
            <Fader className="h-[12px] bg-white" label="delayR" value="0317" />
            <i className="absolute bottom-0 left-[55px] top-0 w-[1px] bg-[#ccc]" />
          </div>
          <div className="flex h-[12px] justify-between bg-white pr-[2px] leading-[12px]">
            <span className="w-[73px] bg-[#20ee10] pl-[2px] text-[#0a8a10]">feedback</span>
            <span className="text-[#bbb]">0.813</span>
          </div>
        </div>
        <div className="ml-[1px] mt-[5px] flex h-[14px] w-[11px] items-center justify-center bg-[#666] text-[11px] leading-none text-white">×</div>
      </div>
      <div className="flex h-[11px] bg-[#0808a0] text-[9px] leading-[11px]">
        <span className="w-[100px] bg-[#2c7a90] pl-[1px] text-[#a8d8e0]">vol</span>
        <span className="flex-1 pr-[1px] text-right text-[#d8d8f8]">1.000</span>
      </div>
      <div className="flex h-[10px] bg-[#0808a0] text-[9px] leading-[10px] text-[#d8d8f8]">
        <span className="w-[66px] pl-[1px]">in_mix</span>
        <span className="w-[53px] bg-[#5f85e8] pl-[1px]">mix</span>
        <span className="ml-[1px] flex-1 bg-[#7a98ee] text-center">i</span>
      </div>
      <div className="flex h-[10px] justify-between bg-[#0808a0] px-[3px] text-[9px] leading-[10px] text-[#d8d8f8]">
        <span>no</span>
        <span className="ml-[14px]">-no-</span>
        <span>x</span>
      </div>
      <div className="mt-[2px]">
        <RampRow />
      </div>
    </div>
  );
}

export default function App() {
  return (
    <div className="relative h-[720px] w-[1280px] overflow-hidden bg-black font-['Liberation_Sans',sans-serif] text-white blur-[0.4px]">
      <HoSt />
      <Chaos />
      <BufferHost />
      <InMulti />
      <Karma />
      <Sacred />
      <Matriarch />
      <OerPrcss />
      <Rainer />
      <Kennedy />
      <PrDelay />
      {/* mouse pointer */}
      <svg width="12" height="18" viewBox="0 0 12 18" className="absolute left-[28px] top-[342px]">
        <path d="M1 1 L1 14 L4 11 L6.5 16.5 L8.5 15.5 L6 10.5 L10.5 10.5 Z" fill="#fff" stroke="#000" strokeWidth="0.8" />
      </svg>
    </div>
  );
}
